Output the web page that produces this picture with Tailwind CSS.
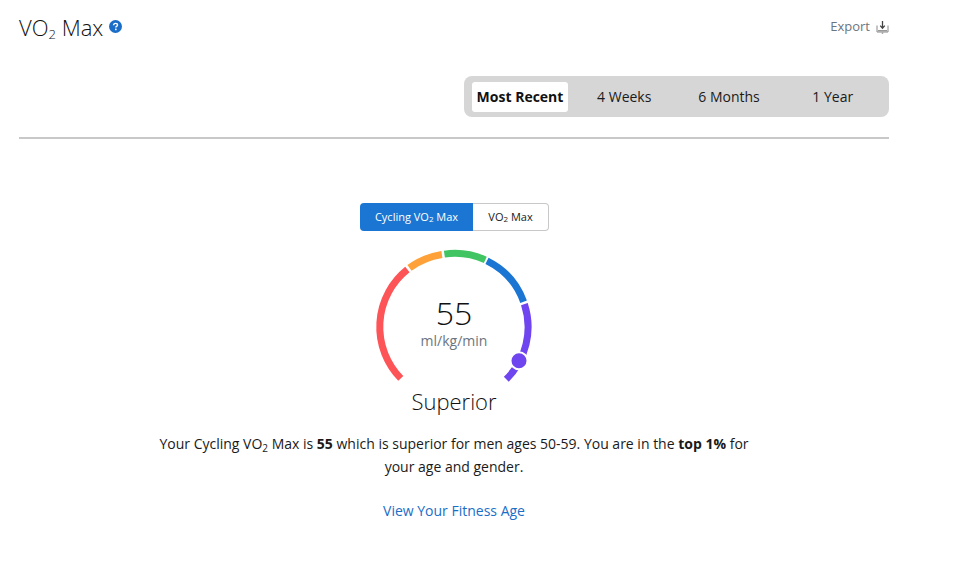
<!DOCTYPE html>
<html>
<head>
    <meta charset="UTF-8">
    <script src="https://cdn.jsdelivr.net/npm/@tailwindcss/browser@4"></script>
</head>
<body class="bg-white font-['Open_Sans',sans-serif] text-[#1a1a1a]">
    <div class="ml-[19px] w-[870px] pt-[12px]">
        <!-- header -->
        <div class="flex justify-between items-start h-[64px]">
            <div class="flex items-center gap-[6px] h-[30px]">
                <h1 class="text-[22px] leading-[30px] font-light text-[#111]">VO<sub class="text-[13px]">2</sub> Max</h1>
                <svg class="w-[13px] h-[13px] mb-[2px]" viewBox="0 0 13 13">
                    <circle cx="6.500" cy="6.500" r="6.500" fill="#1a6ec7"/>
                    <path d="M4.600 5.200c0-1.100.9-1.800 2-1.800s1.900.7 1.900 1.600c0 1.400-1.700 1.400-1.700 2.600" fill="none" stroke="#fff" stroke-width="1.400"/>
                    <rect x="6" y="8.600" width="1.600" height="1.600" fill="#fff"/>
                </svg>
            </div>
            <div class="flex items-center gap-[6px] h-[30px] text-[13px] text-[#6b7580]">
                <span>Export</span>
                <svg class="w-[13px] h-[13px]" viewBox="0 0 13 13" fill="none">
                    <path d="M1 4.500v6.500h11V4.500" stroke="#888" stroke-width="1"/>
                    <path d="M6.500 0v7M4.200 4.600l2.300 2.600 2.300-2.600" stroke="#444" stroke-width="1.300"/>
                    <rect x="2" y="9" width="9" height="1.500" fill="#999"/>
                    <path d="M6.500 11v2" stroke="#aaa" stroke-width="1.500"/>
                </svg>
            </div>
        </div>

        <!-- range tabs -->
        <div class="flex justify-end">
            <div class="flex items-center w-[425px] h-[41px] bg-[#d6d6d6] rounded-[8px] pl-[8px] text-[14px]">
                <div class="w-[96px] h-[30px] bg-white rounded-[3px] flex items-center justify-center font-bold text-[#111]">Most Recent</div>
                <div class="w-[112.500px] text-center">4 Weeks</div>
                <div class="w-[97px] text-center">6 Months</div>
                <div class="w-[110.500px] text-center">1 Year</div>
            </div>
        </div>
        <div class="mt-[20px] h-[2px] bg-[#c8c8c8]"></div>

        <div class="flex flex-col items-center pt-[64px]">
            <!-- toggle -->
            <div class="flex w-[189px] h-[28px] text-[11px] font-medium">
                <div class="w-[113px] pl-[1px] bg-[#1a76d2] text-white rounded-l-[4px] flex items-center justify-center">Cycling VO<sub class="text-[8px]">2</sub>&nbsp;Max</div>
                <div class="w-[76px] pl-[1px] border border-l-0 border-[#c8c8c8] rounded-r-[4px] flex items-center justify-center">VO<sub class="text-[8px]">2</sub>&nbsp;Max</div>
            </div>

            <!-- gauge -->
            <div class="relative w-[160px] h-[139px] mt-[16px]">
                <svg class="w-[160px] h-[160px]" viewBox="0 0 160 160" fill="none" stroke-width="7">
                    <path d="M26.800 131.400A73.500 73.500 0 0 1 33.400 22.500" stroke="#fd5457"/>
                    <path d="M35.500 20.900A73.500 73.500 0 0 1 67.900 7.500" stroke="#fea138"/>
                    <path d="M70.400 7.100A73.500 73.500 0 0 1 111.300 12.900" stroke="#41c562"/>
                    <path d="M113 13.800A73.500 73.500 0 0 1 149.600 54.700" stroke="#1a76d2"/>
                    <path d="M150.400 57.100A73.500 73.500 0 0 1 132.300 132.300" stroke="#6f45f0"/>
                    <circle cx="145" cy="113.700" r="8.500" fill="#6f45f0" stroke="#fff" stroke-width="2"/>
                </svg>
                <div class="absolute top-[48px] left-0 w-full text-center text-[32px] leading-[36px] font-light text-[#111]">55</div>
                <div class="absolute top-[84px] left-0 w-full text-center text-[14px] leading-[20px] text-[#6b7580]">ml/kg/min</div>
            </div>
            <div class="text-[22px] leading-[30px] font-light text-[#111]">Superior</div>

            <p class="w-[600px] text-center text-[14px] leading-[23px] mt-[16px]">Your Cycling VO<sub class="text-[10px]">2</sub> Max is <b>55</b> which is superior for men ages 50-59. You are in the <b>top 1%</b> for<br>your age and gender.</p>
            <a class="mt-[23px] text-[14px] leading-[20px] text-[#1a6ec7]">View Your Fitness Age</a>
        </div>
    </div>
</body>
</html>
